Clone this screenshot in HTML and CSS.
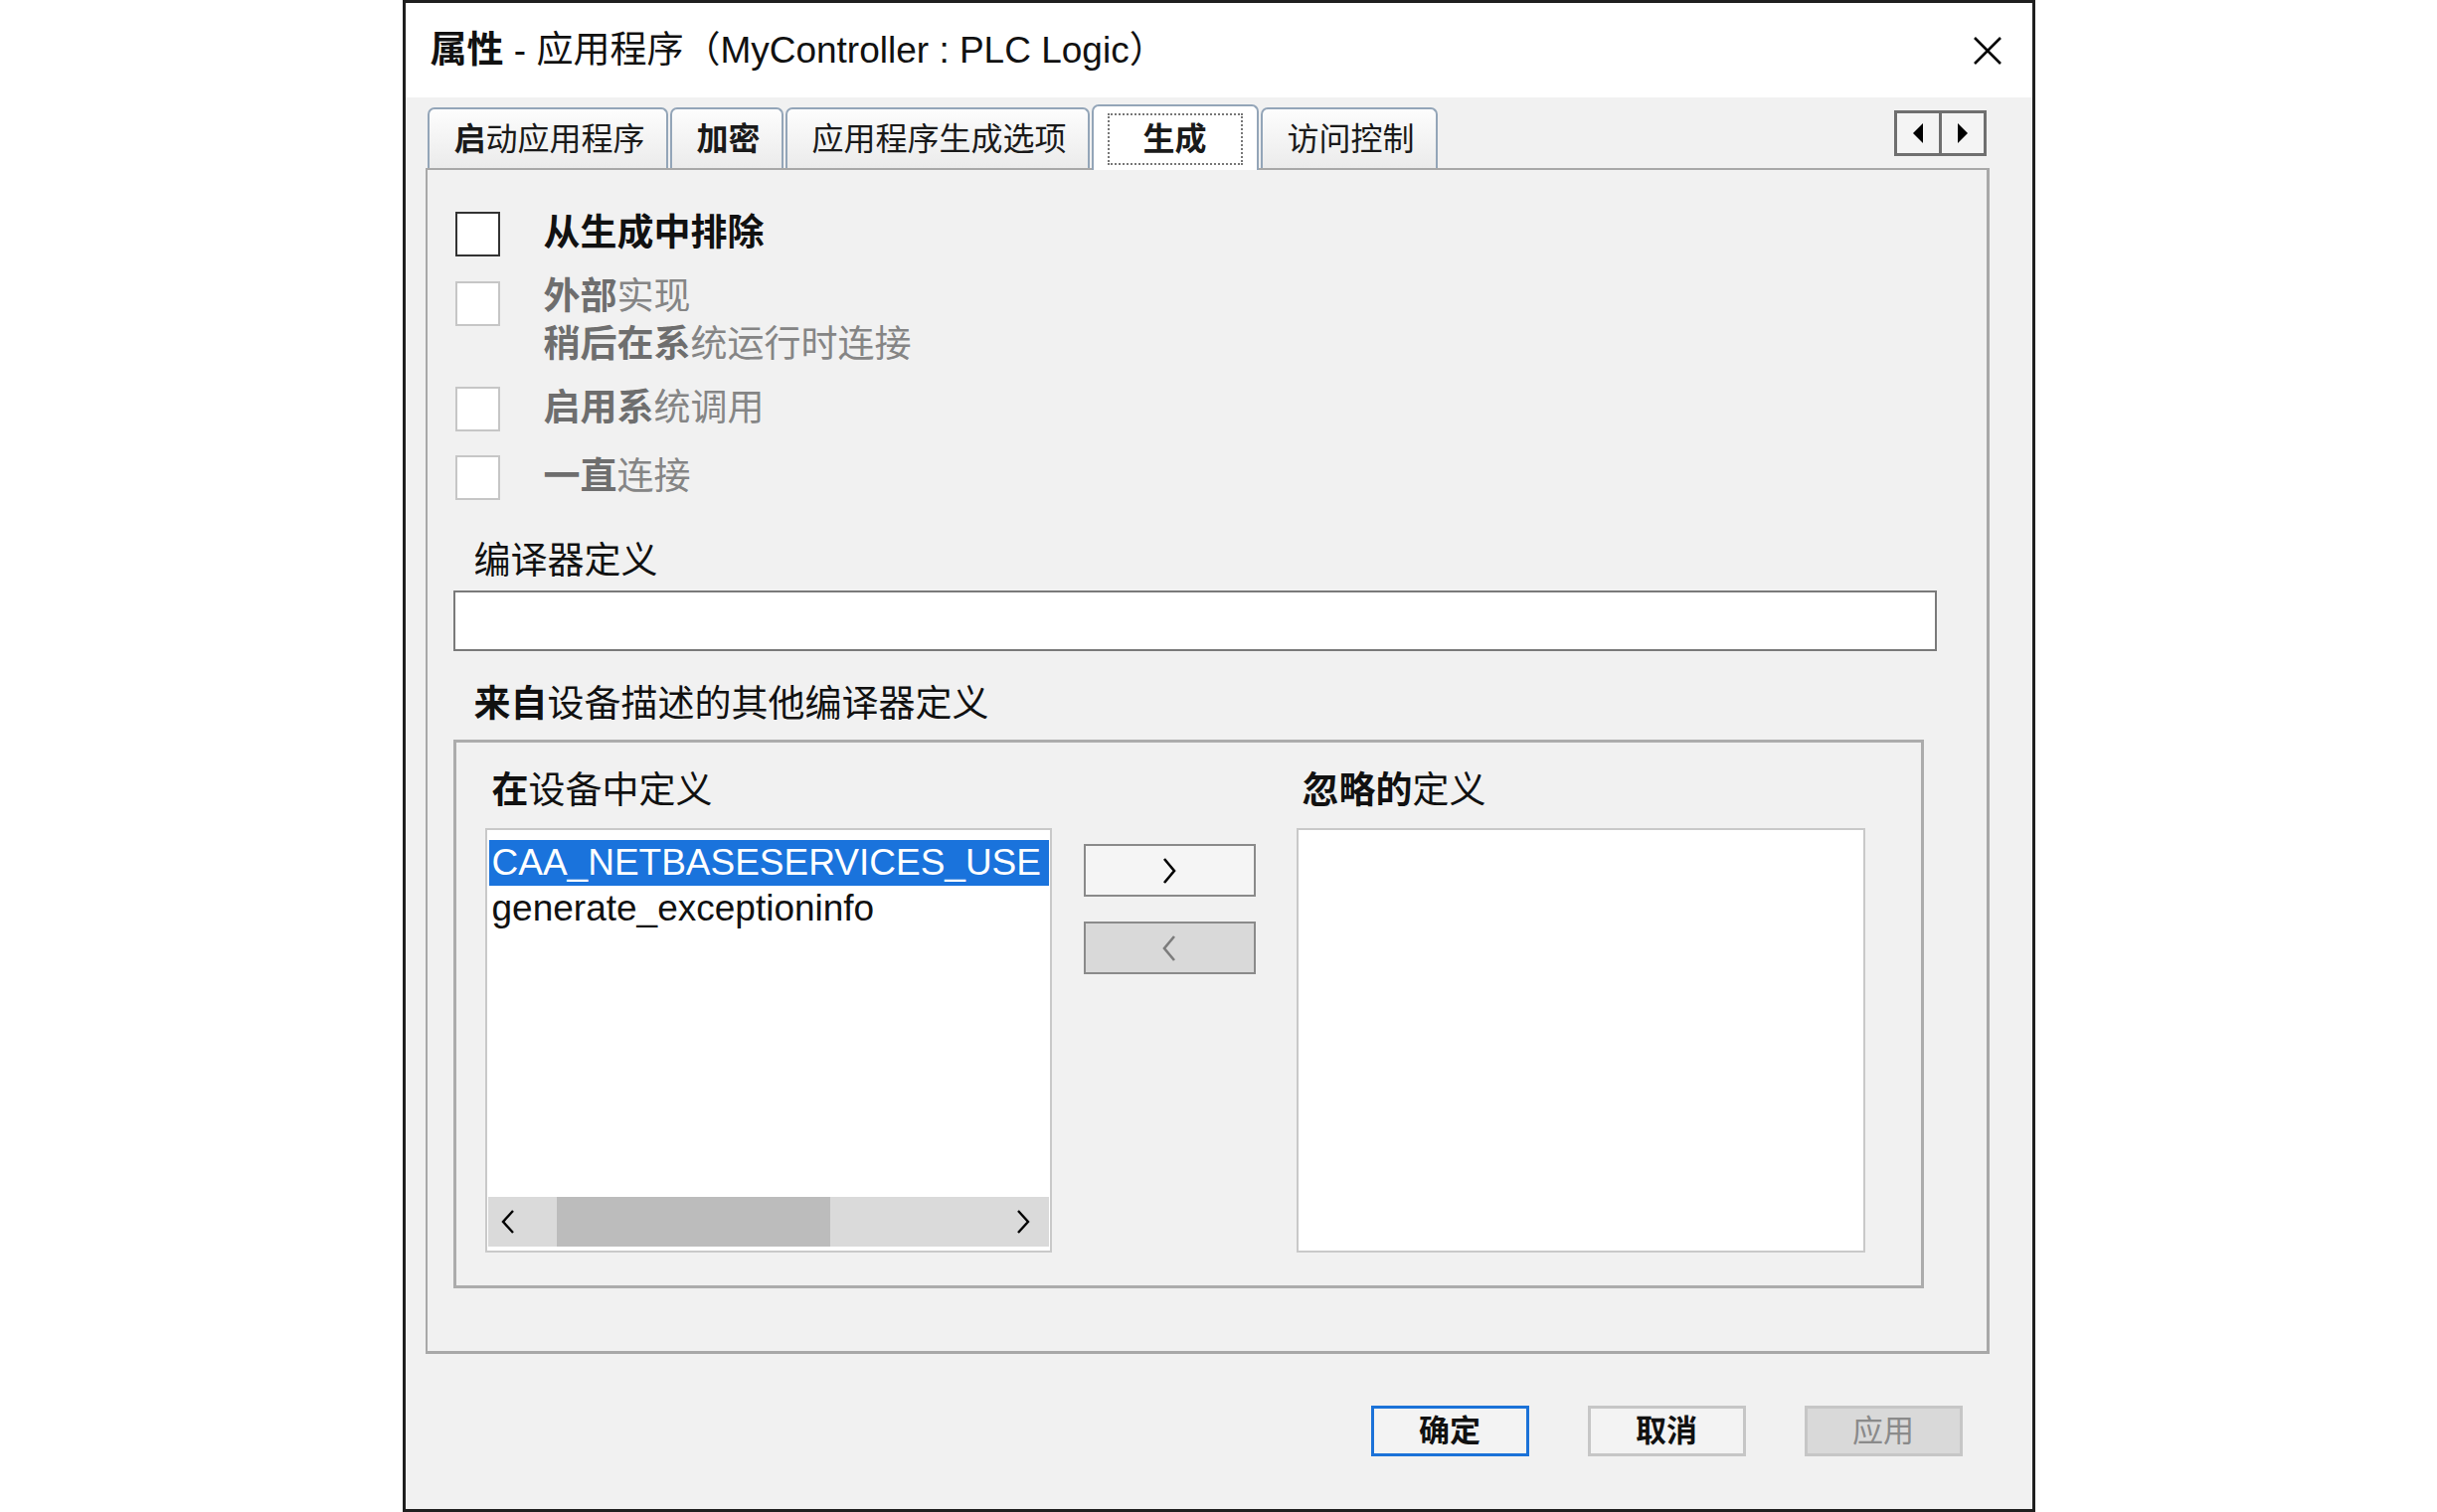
FILE: index.html
```html
<!DOCTYPE html>
<html lang="zh-CN">
<head>
    <meta charset="UTF-8">
    <title>属性 - 应用程序</title>
    <link rel="stylesheet" href="styles.css">
</head>
<body>
    <div class="dialog">
        <div class="titlebar">
            <span class="title"><b>属性</b> - 应用程序（MyController : PLC Logic）</span>
            <svg class="close" width="30" height="30" viewBox="0 0 30 30">
                <path d="M2 2 L28 28 M28 2 L2 28" stroke="#000" stroke-width="2.6" fill="none"/>
            </svg>
        </div>

        <div class="tabbar">
            <div class="tab"><b>启</b>动应用程序</div>
            <div class="tab"><b>加密</b></div>
            <div class="tab">应用程序生成选项</div>
            <div class="tab active"><span class="focus"><b>生成</b></span></div>
            <div class="tab">访问控制</div>
            <div class="tab-nav">
                <span class="nav-cell">
                    <svg width="12" height="22" viewBox="0 0 12 22"><path d="M11 1 L1 11 L11 21 Z" fill="#000"/></svg>
                </span>
                <span class="nav-cell">
                    <svg width="12" height="22" viewBox="0 0 12 22"><path d="M1 1 L11 11 L1 21 Z" fill="#000"/></svg>
                </span>
            </div>
        </div>

        <div class="panel">
            <div class="checks">
                <div class="check-row">
                    <span class="check"></span>
                    <span class="check-label"><b>从生成中排除</b></span>
                </div>
                <div class="check-row disabled multi">
                    <span class="check"></span>
                    <span class="check-label"><b>外部</b>实现<br><b>稍后在系</b>统运行时连接</span>
                </div>
                <div class="check-row disabled">
                    <span class="check"></span>
                    <span class="check-label"><b>启用系</b>统调用</span>
                </div>
                <div class="check-row disabled last">
                    <span class="check"></span>
                    <span class="check-label"><b>一直</b>连接</span>
                </div>
            </div>

            <div class="field-label first">编译器定义</div>
            <div class="text-input"></div>

            <div class="field-label second"><b>来自</b>设备描述的其他编译器定义</div>
            <div class="group">
                <div class="group-label"><b>在</b>设备中定义</div>
                <div></div>
                <div class="group-label right"><b>忽略的</b>定义</div>

                <div class="list">
                    <div class="item selected">CAA_NETBASESERVICES_USE</div>
                    <div class="item">generate_exceptioninfo</div>
                    <div class="hscroll">
                        <span class="sb-left">
                            <svg width="14" height="26" viewBox="0 0 14 26"><path d="M12 2 L2 13 L12 24" stroke="#000" stroke-width="2.4" fill="none"/></svg>
                        </span>
                        <span class="sb-thumb"></span>
                        <span class="sb-track"></span>
                        <span class="sb-right">
                            <svg width="14" height="26" viewBox="0 0 14 26"><path d="M2 2 L12 13 L2 24" stroke="#000" stroke-width="2.4" fill="none"/></svg>
                        </span>
                    </div>
                </div>

                <div class="movers">
                    <div class="mover">
                        <svg width="14" height="28" viewBox="0 0 14 28"><path d="M2 2 L12 14 L2 26" stroke="#000" stroke-width="2.6" fill="none"/></svg>
                    </div>
                    <div class="mover off">
                        <svg width="14" height="28" viewBox="0 0 14 28"><path d="M12 2 L2 14 L12 26" stroke="#7c7c7c" stroke-width="2.6" fill="none"/></svg>
                    </div>
                </div>

                <div class="list right"></div>
            </div>
        </div>

        <div class="footer">
            <button class="btn primary"><b>确定</b></button>
            <button class="btn"><b>取消</b></button>
            <button class="btn off">应用</button>
        </div>
    </div>
</body>
</html>
```

FILE: styles.css
```css
body {
    margin: 0;
    background: #fff;
    font-family: "Liberation Sans", "Noto Sans CJK SC", sans-serif;
    color: #111;
}
b {
    font-weight: 700;
}
.dialog {
    width: 1642px;
    height: 1521px;
    margin: 0 auto;
    box-sizing: border-box;
    border: 3px solid #1f1f1f;
    background: #f1f1f1;
    display: flex;
    flex-direction: column;
}
.titlebar {
    height: 95px;
    background: #fff;
    display: flex;
    align-items: center;
    justify-content: space-between;
    padding: 0 30px 0 25px;
}
.title {
    font-size: 37px;
    line-height: 44px;
}
.close {
    display: block;
}

/* tabs */
.tabbar {
    height: 71px;
    box-sizing: border-box;
    padding: 7px 46px 0 22px;
    display: flex;
    align-items: flex-end;
    gap: 2px;
}
.tab {
    height: 61px;
    box-sizing: border-box;
    padding: 0 21px 0 25px;
    border: 2px solid #93a5b8;
    border-bottom: none;
    border-radius: 7px 7px 0 0;
    background: linear-gradient(#fdfdfd, #ebebeb);
    font-size: 32px;
    line-height: 40px;
    display: flex;
    align-items: center;
    color: #1a1a1a;
}
.tab.active {
    height: 66px;
    margin-bottom: -2px;
    padding: 7px 14px 0;
    align-items: flex-start;
    background: #fff;
    position: relative;
    z-index: 1;
}
.focus {
    display: flex;
    align-items: center;
    height: 52px;
    box-sizing: border-box;
    padding: 0 34px;
    border: 2px dotted #777;
}
.tab-nav {
    margin-left: auto;
    align-self: flex-start;
    margin-top: 6px;
    display: flex;
    border: 3px solid #6f6f6f;
    background: #f4f4f4;
}
.nav-cell {
    width: 42px;
    height: 40px;
    display: flex;
    align-items: center;
    justify-content: center;
}
.nav-cell + .nav-cell {
    border-left: 3px solid #6f6f6f;
}

/* panel */
.panel {
    height: 1193px;
    box-sizing: border-box;
    margin: 0 43px 0 20px;
    padding: 40px 50px 0 26px;
    border: 2px solid #a8a8a8;
    border-right-width: 3px;
    border-bottom-width: 3px;
}
.checks {
    display: flex;
    flex-direction: column;
    gap: 16px;
    margin-left: 2px;
}
.check-row {
    display: flex;
    align-items: flex-start;
    gap: 44px;
    font-size: 37px;
    line-height: 48px;
}
.check-row.last {
    margin-top: 5px;
}
.check {
    width: 45px;
    height: 45px;
    box-sizing: border-box;
    margin-top: 2px;
    border: 2px solid #333;
    background: #fff;
    flex: none;
}
.check-row.disabled {
    color: #858585;
}
.check-row.disabled b {
    color: #6e6e6e;
}
.check-row.disabled .check {
    border-color: #c6c6c6;
}
.check-row.multi .check {
    margin-top: 8px;
}
.field-label {
    margin-left: 21px;
    font-size: 37px;
    line-height: 48px;
}
.field-label.first {
    margin-top: 37px;
}
.field-label.second {
    margin-top: 30px;
}
.text-input {
    margin-top: 5px;
    height: 61px;
    box-sizing: border-box;
    border: 2px solid #7a7a7a;
    background: #fff;
}

/* group box */
.group {
    margin: 11px 13px 0 0;
    height: 552px;
    box-sizing: border-box;
    padding: 25px 0 0 29px;
    border: 3px solid #acacac;
    display: grid;
    grid-template-columns: 570px 205px 613px;
    grid-template-rows: 48px 427px;
    row-gap: 13px;
}
.group-label {
    font-size: 37px;
    line-height: 48px;
    margin-left: 7px;
}
.group-label.right {
    margin-left: 47px;
}
.list {
    box-sizing: border-box;
    border: 2px solid #c9c9c9;
    background: #fff;
    padding: 10px 1px 0 2px;
    display: flex;
    flex-direction: column;
    overflow: hidden;
}
.list.right {
    margin-left: 41px;
}
.item {
    font-size: 37px;
    line-height: 46px;
    padding: 0 3px;
    white-space: nowrap;
    overflow: hidden;
}
.item.selected {
    background: #1a73dc;
    color: #fff;
}
.hscroll {
    margin: auto 0 4px -1px;
    height: 50px;
    background: #dadada;
    display: flex;
}
.sb-left, .sb-right {
    display: flex;
    align-items: center;
}
.sb-left {
    width: 69px;
    padding-left: 13px;
    box-sizing: border-box;
}
.sb-right {
    padding-right: 19px;
}
.sb-thumb {
    width: 275px;
    background: #bcbcbc;
}
.sb-track {
    flex: 1;
}
.movers {
    padding: 16px 0 0 32px;
    display: flex;
    flex-direction: column;
    gap: 25px;
}
.mover {
    height: 53px;
    box-sizing: border-box;
    border: 2px solid #8a8a8a;
    background: #f5f5f5;
    display: flex;
    align-items: center;
    justify-content: center;
}
.mover.off {
    background: #d9d9d9;
}

/* footer */
.footer {
    display: flex;
    justify-content: flex-end;
    gap: 59px;
    padding: 52px 70px 0 0;
}
.btn {
    width: 159px;
    height: 51px;
    box-sizing: border-box;
    border: 3px solid #c6c6c6;
    background: #f3f3f3;
    font-family: "Liberation Sans", "Noto Sans CJK SC", sans-serif;
    font-size: 31px;
    line-height: 40px;
    color: #111;
    padding: 0;
}
.btn.primary {
    border-color: #1b72d8;
}
.btn.off {
    background: #d9d9d9;
    color: #8a8a8a;
}
```
